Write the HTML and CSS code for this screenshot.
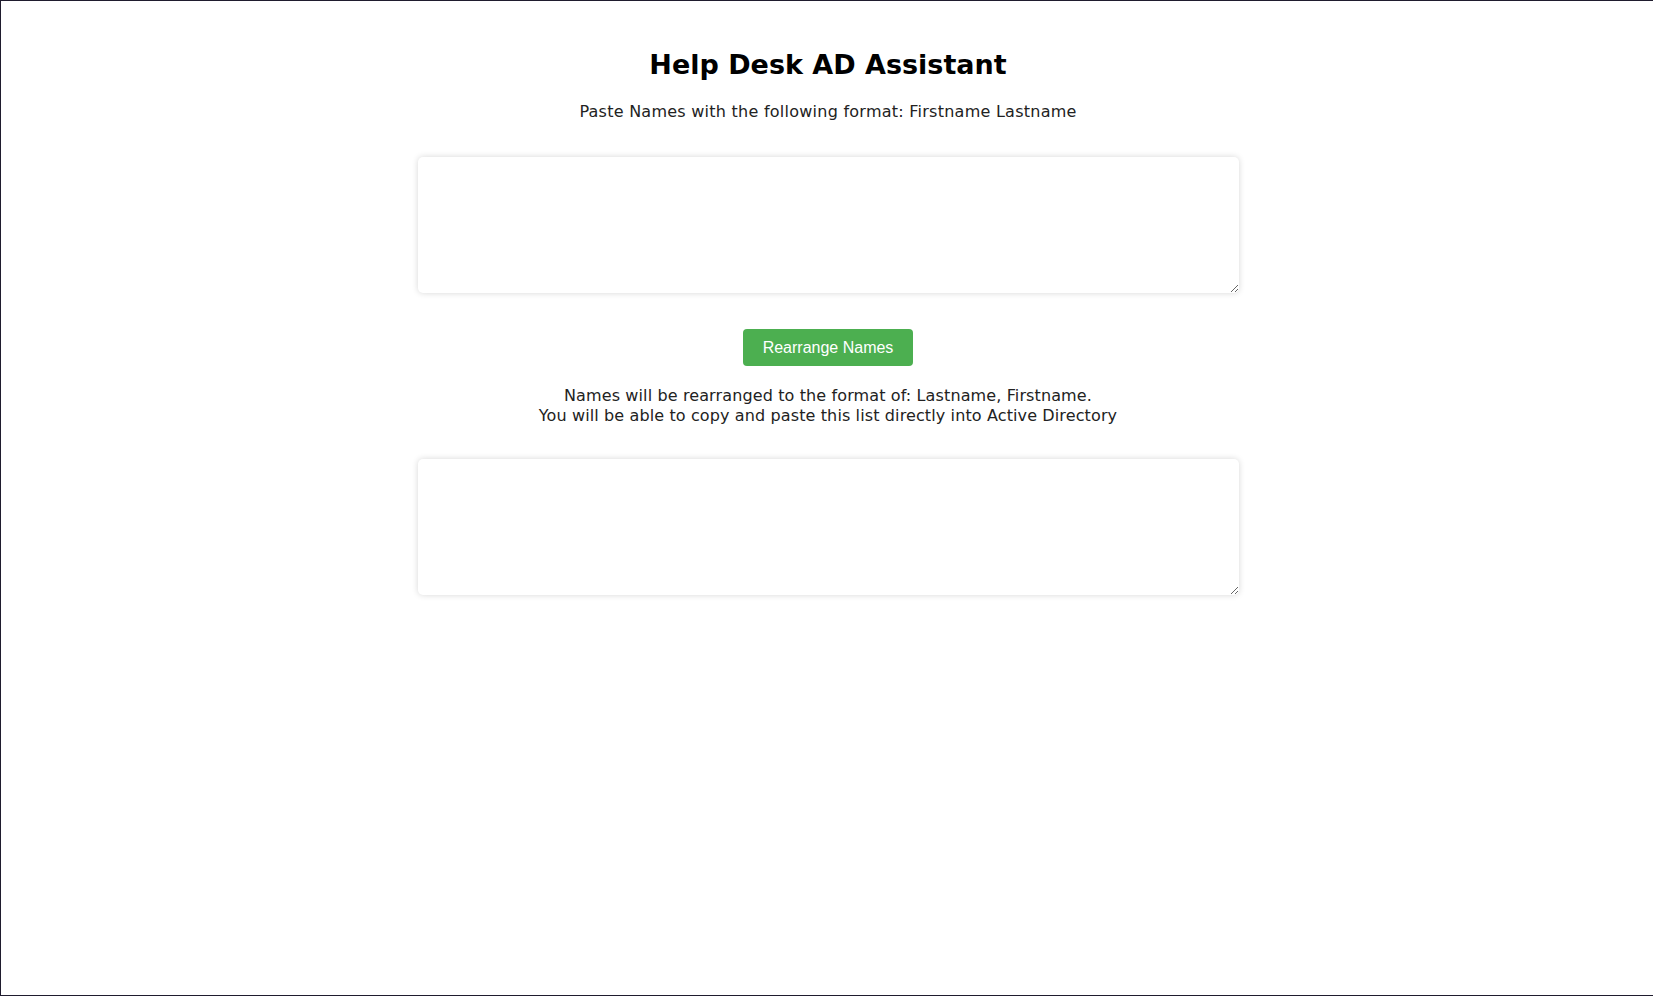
FILE: index.html
```html
<!DOCTYPE html>
<html lang="en">
<head>
<meta charset="utf-8">
<title>Help Desk AD Assistant</title>
<link rel="stylesheet" href="styles.css">
</head>
<body>
<div class="page">
  <h1 class="title">Help Desk AD Assistant</h1>
  <p class="subtitle">Paste Names with the following format: Firstname Lastname</p>
  <textarea class="box box-input"></textarea>
  <button class="btn" type="button">Rearrange Names</button>
  <p class="note">Names will be rearranged to the format of: Lastname, Firstname.<br>You will be able to copy and paste this list directly into Active Directory</p>
  <textarea class="box box-output"></textarea>
</div>
</body>
</html>
```
FILE: styles.css
```css
html, body {
  margin: 0;
  padding: 0;
  background: #ffffff;
}

.page {
  box-sizing: border-box;
  height: 996px;
  padding-left: 2px;
  border-top: 1px solid #1f1c2e;
  border-left: 1px solid #1f1c2e;
  border-bottom: 1px solid #1f1c2e;
  display: flex;
  flex-direction: column;
  align-items: center;
  font-family: "DejaVu Sans", "Open Sans", sans-serif;
  color: #222222;
}

.title {
  margin: 46px 0 0;
  font-size: 27px;
  line-height: 36px;
  font-weight: 700;
  color: #000000;
}

.subtitle {
  margin: 19px 0 0;
  font-size: 16px;
  line-height: 20px;
  letter-spacing: 0.25px;
}

.box {
  box-sizing: border-box;
  width: 821px;
  height: 136px;
  border: none;
  border-radius: 5px;
  box-shadow: 0 0 6px rgba(0, 0, 0, 0.16);
  background: #ffffff;
  outline: none;
  padding: 10px;
  font-family: inherit;
}

.box-input {
  margin-top: 35px;
}

.btn {
  margin-top: 36px;
  height: 37px;
  padding: 0 20px;
  border: none;
  border-radius: 4px;
  background: #4caf50;
  color: #ffffff;
  font-family: "Liberation Sans", Arial, sans-serif;
  font-size: 16px;
}

.note {
  margin: 20px 0 0;
  font-size: 16px;
  line-height: 20px;
  letter-spacing: 0.12px;
  text-align: center;
}

.box-output {
  margin-top: 33px;
}
```
